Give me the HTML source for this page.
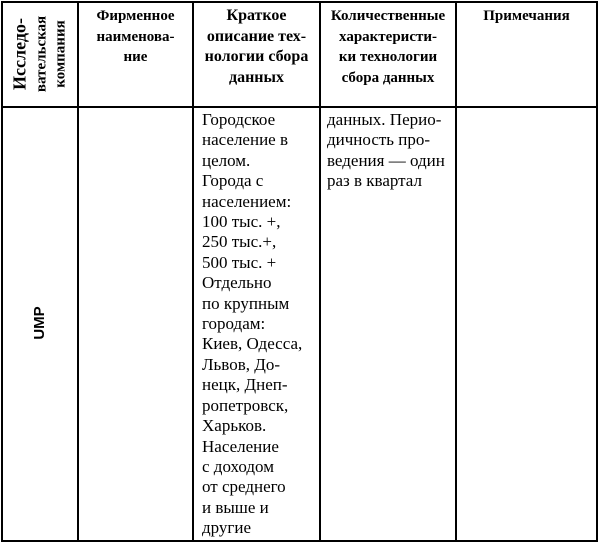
<!DOCTYPE html>
<html><head><meta charset="utf-8"><style>
body{margin:0;width:600px;height:543px;background:#fff;position:relative;overflow:hidden;font-family:"Liberation Serif","DejaVu Serif",serif;color:#000}
.v{position:absolute;top:1px;width:2px;height:541px;background:#000}
.h{position:absolute;left:1px;width:597px;height:2px;background:#000}
.hd{position:absolute;top:6px;font-weight:bold;font-size:15px;line-height:20.5px;text-align:center}
.bd{position:absolute;font-size:17px;line-height:20.4px;white-space:nowrap}
</style></head><body>
<div class="h" style="top:1px"></div>
<div class="h" style="top:106px"></div>
<div class="h" style="top:540px"></div>
<div class="v" style="left:1px"></div>
<div class="v" style="left:77px"></div>
<div class="v" style="left:192px"></div>
<div class="v" style="left:319px"></div>
<div class="v" style="left:455px"></div>
<div class="v" style="left:596px"></div>

<div style="position:absolute;left:-12px;top:23px;width:107px;height:62px;transform:rotate(-90deg);font-weight:bold;font-size:15px;line-height:19.5px;text-align:center"><span style="font-size:18px">Исследо-</span><br>вательская<br>компания</div>

<div class="hd" style="left:79px;width:113px">Фирменное<br>наименова-<br>ние</div>
<div class="hd" style="left:194px;width:125px;font-size:16px">Краткое<br>описание тех-<br>нологии сбора<br>данных</div>
<div class="hd" style="left:321px;width:134px">Количественные<br>характеристи-<br>ки технологии<br>сбора данных</div>
<div class="hd" style="left:457px;width:139px">Примечания</div>

<div style="position:absolute;left:20px;top:313px;width:40px;text-align:center;transform:rotate(-90deg);font-family:'Liberation Sans',sans-serif;font-weight:bold;font-size:15px;line-height:20px">UMP</div>

<div class="bd" style="left:202px;top:110px">Городское<br>население в<br>целом.<br>Города с<br>населением:<br>100 тыс. +,<br>250 тыс.+,<br>500 тыс. +<br>Отдельно<br>по крупным<br>городам:<br>Киев, Одесса,<br>Львов, До-<br>нецк, Днеп-<br>ропетровск,<br>Харьков.<br>Население<br>с доходом<br>от среднего<br>и выше и<br>другие</div>
<div class="bd" style="left:327px;top:110px">данных. Перио-<br>дичность про-<br>ведения — один<br>раз в квартал</div>
</body></html>
